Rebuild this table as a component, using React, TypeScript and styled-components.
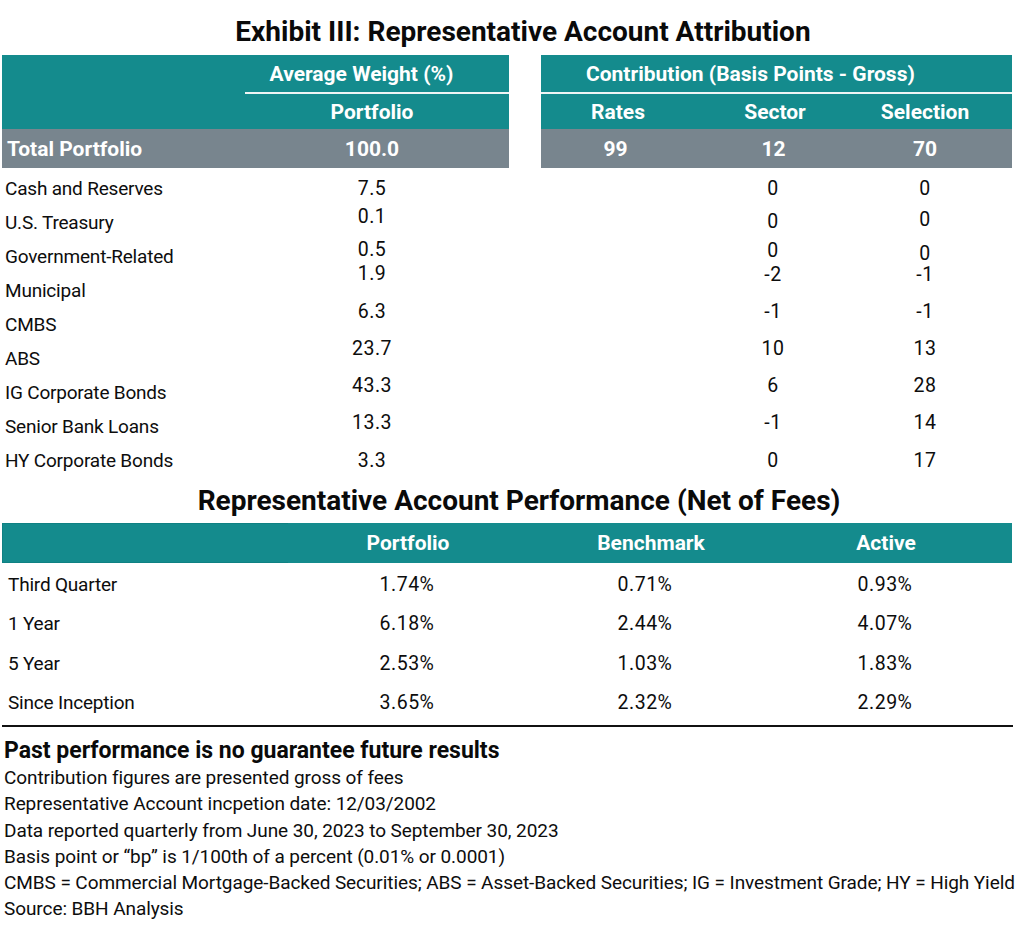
import React from "react";
import styled, { createGlobalStyle } from "styled-components";

const GlobalStyle = createGlobalStyle`
  html, body { margin: 0; padding: 0; background: #ffffff; }
  body {
    font-family: Roboto, "Liberation Sans", sans-serif;
    color: #0d0d0d;
  }
`;

const TEAL = "#148b8d";
const SLATE = "#78858e";
const ATTR_COLS = "243px 264px 32px 154px 160px 157px";
const PERF_COLS = "286px 240px 240px 244px";

const Page = styled.div`
  width: 1024px;
  height: 940px;
  overflow: hidden;
  display: flex;
  flex-direction: column;
`;

const Title = styled.h1<{ $h: number; $pt: number; $shift: number }>`
  margin: 0;
  box-sizing: border-box;
  height: ${(p) => p.$h}px;
  padding-top: ${(p) => p.$pt}px;
  padding-left: ${(p) => p.$shift}px;
  display: flex;
  align-items: center;
  justify-content: center;
  font-size: 28px;
  font-weight: 700;
  color: #0a0a0a;
  white-space: nowrap;
`;

const HeadGrid = styled.div`
  display: grid;
  grid-template-columns: ${ATTR_COLS};
  grid-template-rows: 39px 35px 39px;
  margin-left: 2px;
`;

const BodyGrid = styled.div`
  display: grid;
  grid-template-columns: ${ATTR_COLS};
  grid-auto-rows: 34px;
  margin-left: 2px;
  padding-top: 3px;
`;

const HeadCell = styled.div<{
  $bg?: string;
  $span?: number;
  $rows?: number;
  $align?: "left" | "center";
  $pl?: number;
  $pr?: number;
  $rule?: boolean;
}>`
  box-sizing: border-box;
  background: ${(p) => p.$bg || TEAL};
  grid-column: span ${(p) => p.$span || 1};
  grid-row: span ${(p) => p.$rows || 1};
  display: flex;
  align-items: center;
  justify-content: ${(p) => (p.$align === "left" ? "flex-start" : "center")};
  padding-left: ${(p) => p.$pl || 0}px;
  padding-right: ${(p) => p.$pr || 0}px;
  border-bottom: ${(p) => (p.$rule ? "2px solid #eef5f5" : "none")};
  color: #ffffff;
  font-size: 21px;
  font-weight: 700;
  white-space: nowrap;
`;

const Spacer = styled.div<{ $rows?: number }>`
  grid-row: span ${(p) => p.$rows || 1};
  background: #ffffff;
`;

const Label = styled.div<{ $pl: number }>`
  display: flex;
  align-items: center;
  padding-left: ${(p) => p.$pl}px;
  font-size: 19px;
  letter-spacing: -0.2px;
  white-space: nowrap;
`;

const Num = styled.div<{ $lift?: number; $pr?: number }>`
  box-sizing: border-box;
  display: flex;
  align-items: center;
  justify-content: center;
  padding-bottom: ${(p) => (p.$lift || 0) * 2}px;
  padding-right: ${(p) => p.$pr || 0}px;
  font-size: 19.5px;
  letter-spacing: 0.5px;
  white-space: nowrap;
`;

const PerfHead = styled.div`
  display: grid;
  grid-template-columns: ${PERF_COLS};
  height: 40px;
  margin-left: 2px;
  width: 1010px;
  background: ${TEAL};
  box-shadow: inset 0 0 0 1px #0f8183;
`;

const PerfBody = styled.div`
  display: grid;
  grid-template-columns: ${PERF_COLS};
  grid-auto-rows: 39.5px;
  margin-left: 2px;
  padding-top: 1.5px;
`;

const Rule = styled.div`
  margin: 2.5px 0 0 2px;
  width: 1011px;
  height: 2px;
  background: #111111;
`;

const Notes = styled.div`
  display: flex;
  flex-direction: column;
  padding-left: 4px;
  padding-top: 10px;
`;

const NoteStrong = styled.div`
  font-size: 23px;
  font-weight: 700;
  line-height: 28px;
  color: #0a0a0a;
  white-space: nowrap;
`;

const Note = styled.div`
  font-size: 19px;
  letter-spacing: -0.08px;
  line-height: 26.3px;
  white-space: nowrap;
`;

type AttrRow = {
  name: string;
  weight: string;
  sector: string;
  selection: string;
  lift: [number, number, number];
};

const attrRows: AttrRow[] = [
  { name: "Cash and Reserves", weight: "7.5", sector: "0", selection: "0", lift: [0, 0, 0] },
  { name: "U.S. Treasury", weight: "0.1", sector: "0", selection: "0", lift: [5.5, 0.5, 3] },
  { name: "Government-Related", weight: "0.5", sector: "0", selection: "0", lift: [7, 5.3, 3] },
  { name: "Municipal", weight: "1.9", sector: "-2", selection: "-1", lift: [16.5, 16, 16] },
  { name: "CMBS", weight: "6.3", sector: "-1", selection: "-1", lift: [13, 13, 13] },
  { name: "ABS", weight: "23.7", sector: "10", selection: "13", lift: [10, 10, 10] },
  { name: "IG Corporate Bonds", weight: "43.3", sector: "6", selection: "28", lift: [7, 7, 7] },
  { name: "Senior Bank Loans", weight: "13.3", sector: "-1", selection: "14", lift: [3.7, 3.7, 3.7] },
  { name: "HY Corporate Bonds", weight: "3.3", sector: "0", selection: "17", lift: [0, 0, 0] },
];

const perfRows = [
  { name: "Third Quarter", p: "1.74%", b: "0.71%", a: "0.93%" },
  { name: "1 Year", p: "6.18%", b: "2.44%", a: "4.07%" },
  { name: "5 Year", p: "2.53%", b: "1.03%", a: "1.83%" },
  { name: "Since Inception", p: "3.65%", b: "2.32%", a: "2.29%" },
];

const notes = [
  "Contribution figures are presented gross of fees",
  "Representative Account incpetion date: 12/03/2002",
  "Data reported quarterly from June 30, 2023 to September 30, 2023",
  "Basis point or \u201cbp\u201d is 1/100th of a percent (0.01% or 0.0001)",
  "CMBS = Commercial Mortgage-Backed Securities; ABS = Asset-Backed Securities; IG = Investment Grade; HY = High Yield",
  "Source: BBH Analysis",
];

export default function App() {
  return (
    <Page>
      <GlobalStyle />
      <Title $h={55} $pt={7} $shift={22}>
        Exhibit III: Representative Account Attribution
      </Title>

      <HeadGrid>
        <HeadCell $rows={2} />
        <HeadCell $rule $pr={31}>Average Weight (%)</HeadCell>
        <Spacer $rows={3} />
        <HeadCell $span={3} $rule $align="left" $pl={45}>
          Contribution (Basis Points - Gross)
        </HeadCell>
        <HeadCell $pr={10}>Portfolio</HeadCell>
        <HeadCell>Rates</HeadCell>
        <HeadCell>Sector</HeadCell>
        <HeadCell $pr={17}>Selection</HeadCell>
        <HeadCell $bg={SLATE} $align="left" $pl={5}>Total Portfolio</HeadCell>
        <HeadCell $bg={SLATE} $pr={10}>100.0</HeadCell>
        <HeadCell $bg={SLATE} $pr={5}>99</HeadCell>
        <HeadCell $bg={SLATE} $pr={3}>12</HeadCell>
        <HeadCell $bg={SLATE} $pr={17}>70</HeadCell>
      </HeadGrid>

      <BodyGrid>
        {attrRows.map((r) => (
          <React.Fragment key={r.name}>
            <Label $pl={3}>{r.name}</Label>
            <Num $lift={r.lift[0]} $pr={10}>{r.weight}</Num>
            <span />
            <span />
            <Num $lift={r.lift[1]} $pr={4}>{r.sector}</Num>
            <Num $lift={r.lift[2]} $pr={17}>{r.selection}</Num>
          </React.Fragment>
        ))}
      </BodyGrid>

      <Title $h={46} $pt={0} $shift={14}>
        Representative Account Performance (Net of Fees)
      </Title>

      <PerfHead>
        <span />
        <HeadCell>Portfolio</HeadCell>
        <HeadCell $pl={6}>Benchmark</HeadCell>
        <HeadCell $pr={8}>Active</HeadCell>
      </PerfHead>

      <PerfBody>
        {perfRows.map((r) => (
          <React.Fragment key={r.name}>
            <Label $pl={6}>{r.name}</Label>
            <Num $pr={2}>{r.p}</Num>
            <Num $pr={6}>{r.b}</Num>
            <Num $pr={10}>{r.a}</Num>
          </React.Fragment>
        ))}
      </PerfBody>

      <Rule />

      <Notes>
        <NoteStrong>Past performance is no guarantee future results</NoteStrong>
        {notes.map((n) => (
          <Note key={n}>{n}</Note>
        ))}
      </Notes>
    </Page>
  );
}
